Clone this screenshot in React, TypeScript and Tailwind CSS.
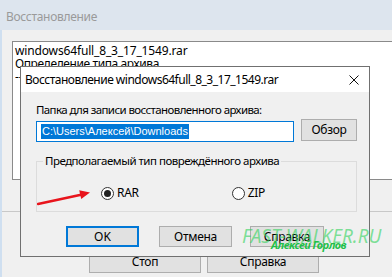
const font = "font-['Noto_Sans','DejaVu_Sans',sans-serif]";

function WinButton({ label, className }: { label: string; className: string }) {
  return (
    <div className={`flex items-center justify-center border border-[#adadad] bg-[#e1e1e1] text-[12px] tracking-[-0.3px] text-black ${className}`}>
      {label}
    </div>
  );
}

function Radio({ checked, label }: { checked: boolean; label: string }) {
  return (
    <div className="flex items-center">
      <div className="flex h-[13px] w-[13px] items-center justify-center rounded-full border border-[#333] bg-white">
        {checked && <div className="h-[7px] w-[7px] rounded-full bg-[#222]" />}
      </div>
      <span className="ml-[3px] text-[12px] leading-none tracking-[-0.3px]">{label}</span>
    </div>
  );
}

export default function App() {
  return (
    <div className={`relative h-[277px] w-[392px] overflow-hidden bg-[#f0f0f0] text-black ${font}`}>
      {/* parent window */}
      <div className="flex h-[30px] items-center bg-[#dde5ee] pl-[6px] pt-[4px] text-[12px] tracking-[-0.3px] text-[#9a9a9a]">Восстановление</div>
      <div className="flex h-[247px] flex-col border-l-2 border-[#cfdff0]">
        <div className="ml-[10px] mt-[11px] h-[139px] w-[400px] border border-[#8a8a8a] bg-white pl-[2px] pt-[2px] text-[12px] leading-[13px]">
          <div className="tracking-[-0.15px]">windows64full_8_3_17_1549.rar</div>
          <div className="tracking-[-0.4px]">Определение типа архива...</div>
          <div>--</div>
        </div>
        <div className="mt-[31px] border-t border-[#c8c8c8]" />
        <div className="mt-[38px] flex">
          <WinButton label="Стоп" className="ml-[87px] h-[23px] w-[112px]" />
          <WinButton label="Справка" className="ml-[6px] h-[23px] w-[112px]" />
        </div>
      </div>

      {/* recovery dialog */}
      <div className="absolute left-[20px] top-[66px] flex h-[191px] w-[350px] flex-col border border-[#707070] bg-[#f0f0f0]">
        <div className="flex h-[25px] items-center justify-between bg-white pl-[4px] pr-[10px] text-[12px] tracking-[-0.5px]">
          <span>Восстановление windows64full_8_3_17_1549.rar</span>
          <svg width="10" height="10" viewBox="0 0 10 10" className="mt-[1px]">
            <path d="M0.5 0.5 L9.5 9.5 M9.5 0.5 L0.5 9.5" stroke="#111" strokeWidth="1" />
          </svg>
        </div>
        <div className="flex flex-col pl-[15px] pr-[12px]">
          <div className="mt-[10px] h-[16px] text-[11.5px] leading-[16px] tracking-[-0.6px]">Папка для записи восстановленного архива:</div>
          <div className="mt-[1px] flex items-start">
            <div className="mt-[2px] flex h-[21px] w-[258px] items-center border border-[#0078d7] bg-white pl-[4px]">
              <span className="bg-[#0078d7] px-[1px] font-['Liberation_Sans',sans-serif] text-[11px] leading-[15px] text-white">C:\Users\Алексей\Downloads</span>
            </div>
            <WinButton label="Обзор" className="ml-[7px] h-[22px] w-[56px]" />
          </div>
          <fieldset className="mt-[11px] h-[59px] w-[321px] border border-[#dcdcdc] px-0">
            <legend className="ml-[6px] px-[2px] text-[11.5px] leading-[16px] tracking-[-0.5px]">Предполагаемый тип повреждённого архива</legend>
            <div className="mt-[11px] flex items-center">
              <svg width="56" height="26" viewBox="0 0 56 26">
                <path d="M1 24 L44 14.8" stroke="#e8141c" strokeWidth="2.5" strokeLinecap="round" />
                <path d="M53 12.5 L42.2 10.3 L44.2 19.1 Z" fill="#e8141c" />
              </svg>
              <div className="ml-[8px]"><Radio checked label="RAR" /></div>
              <div className="ml-[93px]"><Radio checked={false} label="ZIP" /></div>
            </div>
          </fieldset>
          <div className="mt-[14px] flex">
            <div className="ml-[30px] flex h-[21px] w-[73px] items-center justify-center border-2 border-[#0078d7] bg-[#e1e1e1] text-[12px]">OK</div>
            <WinButton label="Отмена" className="ml-[20px] h-[21px] w-[73px]" />
            <WinButton label="Справка" className="ml-[18px] h-[21px] w-[74px]" />
          </div>
        </div>
      </div>

      {/* watermark */}
      <div className="absolute left-[242px] top-[224px] flex flex-col items-start whitespace-nowrap">
        <span className="font-['Noto_Sans',sans-serif] text-[19px] italic leading-[24px] text-[#2fd35a]/60">FAST-WALKER.RU</span>
        <span className="ml-[29px] -mt-[10px] text-[11px] font-bold italic leading-[14px] tracking-[-0.5px] text-[#1fc048]">Алексей Горлов</span>
      </div>
    </div>
  );
}
